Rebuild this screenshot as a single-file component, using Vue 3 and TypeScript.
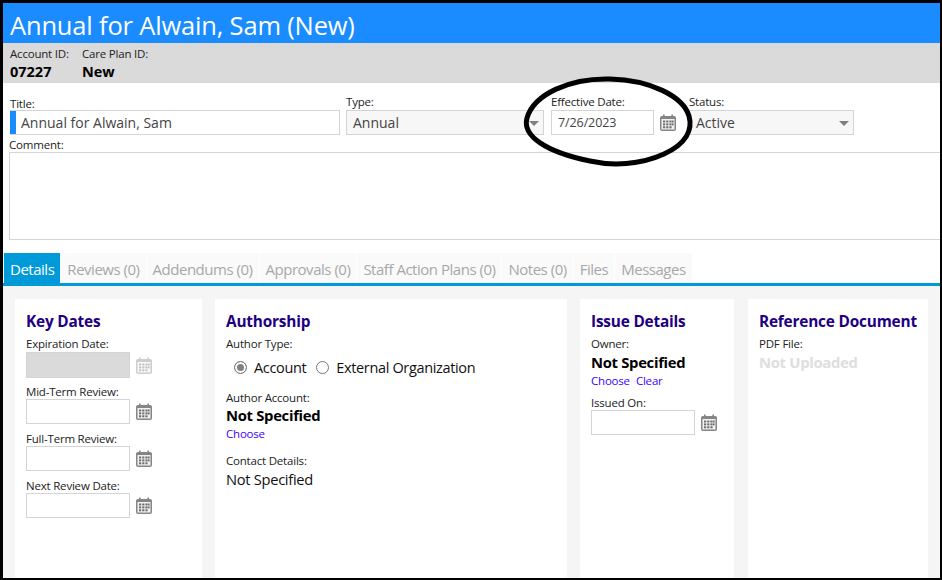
<template>
  <div class="screen">
    <header class="title-bar">Annual for Alwain, Sam (New)</header>

    <div class="id-bar">
      <div class="id-item account">
        <span class="label">Account ID:</span>
        <strong>07227</strong>
      </div>
      <div class="id-item">
        <span class="label">Care Plan ID:</span>
        <strong>New</strong>
      </div>
    </div>

    <section class="form">
      <div class="form-row">
        <div class="field title-field">
          <span class="label">Title:</span>
          <div class="input title-input"><i class="required"></i>Annual for Alwain, Sam</div>
        </div>
        <div class="field type-field">
          <span class="label">Type:</span>
          <div class="input select">Annual<i class="caret"></i></div>
        </div>
        <div class="field date-field">
          <span class="label">Effective Date:</span>
          <div class="date-line">
            <div class="input date-input">7/26/2023</div>
            <svg class="cal" viewBox="0 0 16 17"><use href="#cal-icon" /></svg>
          </div>
        </div>
        <div class="field status-field">
          <span class="label">Status:</span>
          <div class="input select">Active<i class="caret"></i></div>
        </div>
      </div>
      <span class="label comment-label">Comment:</span>
      <div class="input comment"></div>
    </section>

    <nav class="tabs">
      <span v-for="(tab, i) in tabs" :key="tab" class="tab" :class="{ active: i === 0 }">{{ tab }}</span>
    </nav>

    <main class="content">
      <section class="card key-dates">
        <h3>Key Dates</h3>
        <div v-for="d in keyDates" :key="d.label" class="date-block">
          <span class="label">{{ d.label }}</span>
          <div class="date-line">
            <div class="input empty-date" :class="{ disabled: d.disabled }"></div>
            <svg class="cal" :class="{ faded: d.disabled }" viewBox="0 0 16 17"><use href="#cal-icon" /></svg>
          </div>
        </div>
      </section>

      <section class="card authorship">
        <h3>Authorship</h3>
        <span class="label type-label">Author Type:</span>
        <div class="radios">
          <span class="radio checked"></span><span class="radio-text">Account</span>
          <span class="radio"></span><span class="radio-text">External Organization</span>
        </div>
        <span class="label">Author Account:</span>
        <strong class="value">Not Specified</strong>
        <a class="link">Choose</a>
        <span class="label contact">Contact Details:</span>
        <span class="plain">Not Specified</span>
      </section>

      <section class="card issue">
        <h3>Issue Details</h3>
        <span class="label">Owner:</span>
        <strong class="value">Not Specified</strong>
        <div class="links"><a class="link">Choose</a><a class="link">Clear</a></div>
        <span class="label issued">Issued On:</span>
        <div class="date-line">
          <div class="input empty-date"></div>
          <svg class="cal" viewBox="0 0 16 17"><use href="#cal-icon" /></svg>
        </div>
      </section>

      <section class="card reference">
        <h3>Reference Document</h3>
        <span class="label">PDF File:</span>
        <strong class="value muted">Not Uploaded</strong>
      </section>
    </main>

    <!-- hand drawn circle lying over the form -->
    <svg class="scribble" viewBox="0 0 942 580" fill="none">
      <path
        d="M610 79 C570 78 534 94 527 118 C522 136 546 152 590 161 C612 166 640 165 664 154 C686 144 693 130 689 116 C683 96 650 80 610 79 Z"
        stroke="#000" stroke-width="5" />
    </svg>

    <svg width="0" height="0" class="defs">
      <symbol id="cal-icon" viewBox="0 0 16 17">
        <path d="M2 2h12a2 2 0 0 1 2 2v11a2 2 0 0 1-2 2H2a2 2 0 0 1-2-2V4a2 2 0 0 1 2-2z" fill="#858585" />
        <rect x="3" y="0.5" width="1.6" height="3" fill="#858585" />
        <rect x="11.4" y="0.5" width="1.6" height="3" fill="#858585" />
        <rect x="1.5" y="5" width="13" height="10.5" fill="#f2f2f2" />
        <g fill="#6e6e6e">
          <rect x="3" y="6.5" width="2.2" height="2" />
          <rect x="6.2" y="6.5" width="2.2" height="2" />
          <rect x="9.4" y="6.5" width="2.2" height="2" />
          <rect x="12" y="6.5" width="1.6" height="2" />
          <rect x="3" y="9.4" width="2.2" height="2" />
          <rect x="6.2" y="9.4" width="2.2" height="2" />
          <rect x="9.4" y="9.4" width="2.2" height="2" />
          <rect x="12" y="9.4" width="1.6" height="2" />
          <rect x="3" y="12.3" width="2.2" height="2" />
          <rect x="6.2" y="12.3" width="2.2" height="2" />
          <rect x="9.4" y="12.3" width="2.2" height="2" />
        </g>
      </symbol>
    </svg>
  </div>
</template>

<script setup lang="ts">
const tabs: string[] = [
  'Details',
  'Reviews (0)',
  'Addendums (0)',
  'Approvals (0)',
  'Staff Action Plans (0)',
  'Notes (0)',
  'Files',
  'Messages'
]

const keyDates: { label: string; disabled?: boolean }[] = [
  { label: 'Expiration Date:', disabled: true },
  { label: 'Mid-Term Review:' },
  { label: 'Full-Term Review:' },
  { label: 'Next Review Date:' }
]
</script>

<style>
html,
body {
  margin: 0;
  background: #fff;
}
</style>

<style scoped>
.screen {
  position: relative;
  width: 942px;
  height: 580px;
  box-sizing: border-box;
  border: solid #000;
  border-width: 3px 2px 2px 3px;
  overflow: hidden;
  display: flex;
  flex-direction: column;
  background: #fff;
  font-family: "Open Sans", "Noto Sans", sans-serif;
  color: #111;
}

.title-bar {
  height: 40px;
  flex: none;
  background: #1a8cff;
  color: #fff;
  font-size: 25.5px;
  line-height: 45px;
  padding-left: 7px;
  letter-spacing: -0.18px;
}

.id-bar {
  height: 40px;
  flex: none;
  background: #dadada;
  display: flex;
  padding-left: 7px;
}

.id-item {
  display: flex;
  flex-direction: column;
}

.id-item.account {
  width: 72px;
}

.id-item strong {
  font-size: 14.5px;
  line-height: 22px;
  color: #000;
}

.label {
  display: block;
  font-size: 11.5px;
  line-height: 14px;
  letter-spacing: -0.2px;
  color: #222;
}

.id-bar .label {
  line-height: 22px;
  height: 18px;
}

.form {
  flex: none;
  height: 170px;
  padding: 12px 0 0 6px;
  box-sizing: border-box;
}

.form-row {
  display: flex;
  height: 40px;
}

.field .label {
  height: 15px;
}

.input {
  box-sizing: border-box;
  border: 1px solid #d4d4d4;
  background: #fff;
  font-size: 14px;
  color: #444;
}

.title-field {
  width: 331px;
  margin-left: 1px;
}

.title-field .label {
  height: 15px;
  line-height: 17px;
}

.title-input {
  height: 25px;
  line-height: 26px;
  padding-left: 5px;
  display: flex;
  align-items: center;
  margin-right: 1px;
  border-left: none;
}

.required {
  width: 6px;
  height: 23px;
  background: #1a8cff;
  margin: 0 5px 0 -5px;
}

.type-field {
  width: 198px;
  margin-left: 5px;
}

.select {
  position: relative;
  height: 25px;
  line-height: 24px;
  padding-left: 6px;
  background: #f7f7f7;
}

.caret {
  position: absolute;
  right: 4px;
  top: 10px;
  border: 5px solid transparent;
  border-top: 5px solid #7f7f7f;
  border-bottom: none;
}

.date-field {
  width: 135px;
  margin-left: 7px;
}

.date-line {
  display: flex;
  align-items: center;
  gap: 6px;
}

.date-input {
  width: 103px;
  height: 25px;
  line-height: 24px;
  padding-left: 6px;
  font-size: 12.5px;
  letter-spacing: -0.1px;
}

.cal {
  width: 16px;
  height: 17px;
  flex: none;
}

.cal.faded {
  opacity: 0.4;
}

.status-field {
  width: 165px;
  margin-left: 3px;
}

.status-field .select {
  padding-left: 6px;
}

.comment-label {
  margin-top: 3px;
  height: 14px;
}

.comment {
  height: 88px;
  width: 950px;
}

.tabs {
  height: 33px;
  flex: none;
  box-sizing: border-box;
  display: flex;
  gap: 1px;
  padding-left: 1px;
  border-bottom: 3px solid #009ad9;
}

.tab {
  height: 30px;
  line-height: 33px;
  padding: 0 6px;
  font-size: 15px;
  letter-spacing: -0.48px;
  color: #a8a8a8;
  background: #fafafa;
  white-space: nowrap;
}

.tab.active {
  background: #009ad9;
  color: #fff;
}

.content {
  flex: 1;
  min-height: 0;
  background: #f5f5f5;
  padding: 13px 0 0 12px;
  display: flex;
  align-items: stretch;
}

.card {
  background: #fff;
  box-sizing: border-box;
  padding: 13px 11px 0;
  display: flex;
  flex-direction: column;
  align-items: flex-start;
}

.card h3 {
  margin: 0 0 5px;
  font-size: 15.4px;
  line-height: 20px;
  font-weight: 700;
  color: #1e0080;
  letter-spacing: -0.2px;
  white-space: nowrap;
}

.key-dates {
  width: 187px;
}

.authorship {
  width: 352px;
  margin-left: 13px;
}

.issue {
  width: 154px;
  margin-left: 13px;
}

.reference {
  width: 180px;
  margin-left: 14px;
}

.date-block {
  height: 47px;
}

.date-block .label,
.type-label {
  height: 15px;
}

.date-block + .date-block .label {
  line-height: 16px;
}

.empty-date {
  width: 104px;
  height: 25px;
}

.empty-date.disabled {
  background: #dadada;
  height: 26px;
}

.radios {
  display: flex;
  align-items: center;
  height: 26px;
  margin: 2px 0 11px 8px;
}

.radio {
  box-sizing: border-box;
  width: 13px;
  height: 13px;
  border-radius: 50%;
  border: 1px solid #777;
  background: #fff;
  margin-right: 7px;
}

.radio.checked {
  background: #808080;
  box-shadow: inset 0 0 0 2px #fff;
}

.radio-text {
  font-size: 14.5px;
  letter-spacing: -0.35px;
  margin-right: 10px;
}

.value {
  font-size: 14.8px;
  line-height: 20px;
  color: #000;
  letter-spacing: -0.3px;
}

.issue .value,
.reference .value {
  margin-top: 1px;
}

.value.muted {
  color: #dedede;
}

.link {
  font-size: 11.5px;
  line-height: 18px;
  color: #3c00ff;
  letter-spacing: -0.2px;
}

.links {
  display: flex;
  gap: 6px;
}

.contact {
  margin-top: 11px;
  height: 15px;
}

.plain {
  font-size: 14.7px;
  letter-spacing: -0.3px;
}

.issued {
  margin-top: 6px;
  height: 14px;
}

.scribble {
  position: absolute;
  left: -3px;
  top: -3px;
  width: 942px;
  height: 580px;
  pointer-events: none;
}

.defs {
  position: absolute;
}
</style>
